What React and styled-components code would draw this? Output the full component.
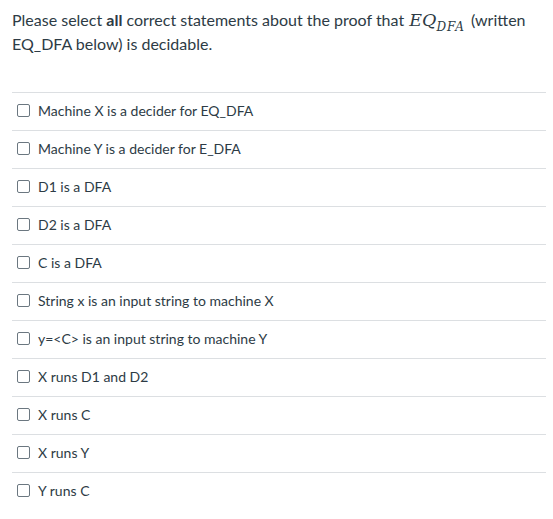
import React from 'react';
import styled, { createGlobalStyle } from 'styled-components';

const GlobalStyle = createGlobalStyle`
  body {
    margin: 0;
    background: #ffffff;
    font-family: Lato, "Liberation Sans", sans-serif;
    color: #2d3b45;
  }
`;

const Question = styled.div`
  padding: 8px 7px 0 12px;
  width: 553px;
  box-sizing: border-box;
`;

const Prompt = styled.p`
  margin: 0 0 36px;
  font-size: 16px;
  line-height: 24px;
`;

const Math = styled.span`
  font-family: "DejaVu Serif", "Liberation Serif", serif;
  font-style: italic;
  font-size: 17.5px;
  margin: 0 2px 0 1px;

  sub {
    font-size: 12px;
    letter-spacing: 1px;
    vertical-align: -5px;
    line-height: 0;
  }
`;

const Answers = styled.ul`
  list-style: none;
  margin: 0;
  padding: 0;
  border-top: 1px solid #dcdfe2;
`;

const Answer = styled.li`
  display: flex;
  align-items: center;
  gap: 8px;
  height: 35px;
  padding: 0 0 2px 5px;
  font-size: 14px;
  border-bottom: ${({ last }) => (last ? 'none' : '1px solid #dcdfe2')};
`;

const Box = styled.span`
  width: 11px;
  height: 11px;
  border: 1px solid #6b7780;
  border-radius: 2px;
  background: #fff;
  flex-shrink: 0;
`;

const answers = [
  'Machine X is a decider for EQ_DFA',
  'Machine Y is a decider for E_DFA',
  'D1 is a DFA',
  'D2 is a DFA',
  'C is a DFA',
  'String x is an input string to machine X',
  'y=<C> is an input string to machine Y',
  'X runs D1 and D2',
  'X runs C',
  'X runs Y',
  'Y runs C',
];

export default function App() {
  return (
    <>
      <GlobalStyle />
      <Question>
        <Prompt>
          Please select <strong>all</strong> correct statements about the proof that{' '}
          <Math>
            EQ<sub>DFA</sub>
          </Math>{' '}
          (written EQ_DFA below) is decidable.
        </Prompt>
        <Answers>
          {answers.map((a, i) => (
            <Answer key={a} last={i === answers.length - 1}>
              <Box />
              {a}
            </Answer>
          ))}
        </Answers>
      </Question>
    </>
  );
}
